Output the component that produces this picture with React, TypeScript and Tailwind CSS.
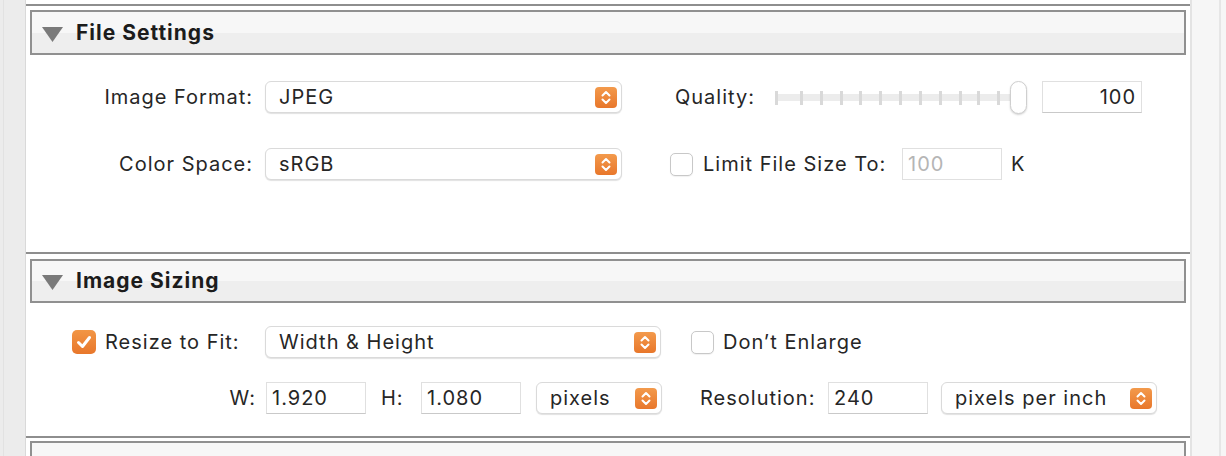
import React from 'react';

function Stepper() {
  return (
    <span className="flex h-[21px] w-[22px] items-center justify-center rounded-[4px] bg-[linear-gradient(#f39a4c,#e8772b)]">
      <svg width="22" height="21" viewBox="0 0 22 21" fill="none">
        <path d="M7.5 8.5 L11 5 L14.5 8.5" stroke="white" strokeWidth="2" strokeLinecap="round" strokeLinejoin="round" />
        <path d="M7.5 12.5 L11 16 L14.5 12.5" stroke="white" strokeWidth="2" strokeLinecap="round" strokeLinejoin="round" />
      </svg>
    </span>
  );
}

function Select({ value, width }: { value: string; width: string }) {
  return (
    <div
      className={`flex h-[32px] ${width} shrink-0 items-center justify-between rounded-[6px] border border-[#dadada] bg-white pl-[13px] pr-[4px] shadow-[0_1px_1px_rgba(0,0,0,0.12)]`}
    >
      <span>{value}</span>
      <Stepper />
    </div>
  );
}

function TextBox({ value, align = 'left', disabled = false }: { value: string; align?: 'left' | 'right'; disabled?: boolean }) {
  return (
    <div
      className={`flex h-[32px] w-[100px] shrink-0 items-center border border-[#e0e0e0] bg-white px-[5px] ${
        align === 'right' ? 'justify-end' : 'justify-start'
      } ${disabled ? 'text-[#b5b5b5]' : 'border-b-[#c9c9c9]'}`}
    >
      {value}
    </div>
  );
}

function Checkbox({ checked = false }: { checked?: boolean }) {
  if (checked) {
    return (
      <span className="flex h-[24px] w-[24px] shrink-0 items-center justify-center rounded-[5px] bg-[linear-gradient(#f29645,#e8772b)]">
        <svg width="24" height="24" viewBox="0 0 24 24" fill="none">
          <path d="M6.5 12.5 L10.5 16.5 L17.5 7.5" stroke="white" strokeWidth="3" strokeLinecap="round" strokeLinejoin="round" />
        </svg>
      </span>
    );
  }
  return <span className="block h-[23px] w-[23px] shrink-0 rounded-[5px] border border-[#c8c8c8] bg-white shadow-[0_1px_1px_rgba(0,0,0,0.06)]" />;
}

function Slider() {
  const ticks = [0, 25, 45, 65, 84, 104, 124, 144, 164, 184, 202, 222];
  return (
    <div className="relative h-[32px] w-[252px] shrink-0">
      <div className="absolute left-0 right-[8px] top-[13px] h-[7px] bg-[#ececec]" />
      {ticks.map((t) => (
        <div key={t} className="absolute top-[10px] h-[14px] w-[3px] bg-[#d9d9d9]" style={{ left: t }} />
      ))}
      <div className="absolute right-0 top-[0px] h-[33px] w-[17px] rounded-full border border-[#cfcfcf] bg-white shadow-[0_1px_2px_rgba(0,0,0,0.18)]" />
    </div>
  );
}

function Header({ title, open = true, top }: { title: string; open?: boolean; top: string }) {
  return (
    <div className={`mx-[4px] ${top} flex h-[45px] items-center border-2 border-[#909090] bg-[linear-gradient(#f7f7f7_50%,#eeeeee_50%)] pl-[10px]`}>
      {open ? (
        <svg width="21" height="15" viewBox="0 0 21 15" className="mt-[3px]">
          <polygon points="0,0 21,0 10.5,15" fill="#7a7a7a" />
        </svg>
      ) : (
        <svg width="21" height="21" viewBox="0 0 21 21" className="mt-[6px]">
          <polygon points="3,0 18,10.5 3,21" fill="#7a7a7a" />
        </svg>
      )}
      <span className={`ml-[13px] text-[21px] font-bold tracking-[1px] text-[#1c1c1c] ${open ? '' : 'mt-[6px]'}`}>{title}</span>
    </div>
  );
}

export default function App() {
  return (
    <div className="flex h-[456px] w-[1226px] overflow-hidden bg-white font-['Inter',sans-serif] text-[20px] tracking-[1px] text-[#262626]">
      {/* left gutter */}
      <div className="w-[26px] shrink-0 border-r border-[#d9d9d9] bg-[#ececec]">
        <div className="ml-[3px] h-full w-px bg-[#e2e2e2]" />
      </div>

      {/* panel */}
      <div className="w-[1164px] shrink-0">
        {/* File Settings */}
        <div className="pt-[4px]">
          <div className="h-[2px] bg-[#8e8e8e]" />
          <Header title="File Settings" top="mt-[4px]" />
          <div className="h-[197px] pt-[26px]">
            <div className="flex h-[32px] items-center">
              <span className="w-[227px] shrink-0 text-right">Image Format:</span>
              <div className="ml-[12px]">
                <Select value="JPEG" width="w-[357px]" />
              </div>
              <span className="ml-[53px] w-[100px] shrink-0">Quality:</span>
              <Slider />
              <div className="ml-[15px]">
                <TextBox value="100" align="right" />
              </div>
            </div>
            <div className="mt-[35px] flex h-[32px] items-center">
              <span className="w-[227px] shrink-0 text-right">Color Space:</span>
              <div className="ml-[12px]">
                <Select value="sRGB" width="w-[357px]" />
              </div>
              <div className="ml-[48px]">
                <Checkbox />
              </div>
              <span className="ml-[10px] w-[199px] shrink-0">Limit File Size To:</span>
              <TextBox value="100" disabled />
              <span className="ml-[9px]">K</span>
            </div>
          </div>
        </div>

        {/* Image Sizing */}
        <div>
          <div className="h-[2px] bg-[#8e8e8e]" />
          <div className="[&>div]:h-[44px]">
            <Header title="Image Sizing" top="mt-[5px]" />
          </div>
          <div className="h-[133px] pt-[23px]">
            <div className="flex h-[32px] items-center">
              <div className="flex w-[239px] shrink-0 items-center pl-[46px]">
                <Checkbox checked />
                <span className="ml-[9px]">Resize to Fit:</span>
              </div>
              <Select value="Width & Height" width="w-[396px]" />
              <div className="ml-[30px]">
                <Checkbox />
              </div>
              <span className="ml-[9px]">Don’t Enlarge</span>
            </div>
            <div className="mt-[24px] flex h-[32px] items-center">
              <span className="w-[230px] shrink-0 text-right">W:</span>
              <div className="ml-[10px]">
                <TextBox value="1.920" />
              </div>
              <span className="ml-[15px] w-[40px] shrink-0">H:</span>
              <TextBox value="1.080" />
              <div className="ml-[15px]">
                <Select value="pixels" width="w-[126px]" />
              </div>
              <span className="ml-[38px] w-[128px] shrink-0">Resolution:</span>
              <TextBox value="240" />
              <div className="ml-[13px]">
                <Select value="pixels per inch" width="w-[216px]" />
              </div>
            </div>
          </div>
        </div>

        {/* Output Sharpening (collapsed, cut off at the bottom edge) */}
        <div>
          <div className="h-[2px] bg-[#8e8e8e]" />
          <Header title="Output Sharpening" open={false} top="mt-[3px]" />
        </div>
      </div>

      {/* right scroll gutter */}
      <div className="flex flex-1 border-l-2 border-[#e3e3e3] bg-[#f6f6f6]">
        <div className="ml-[27px] h-full w-[2px] bg-[#e6e6e6]" />
      </div>
    </div>
  );
}
